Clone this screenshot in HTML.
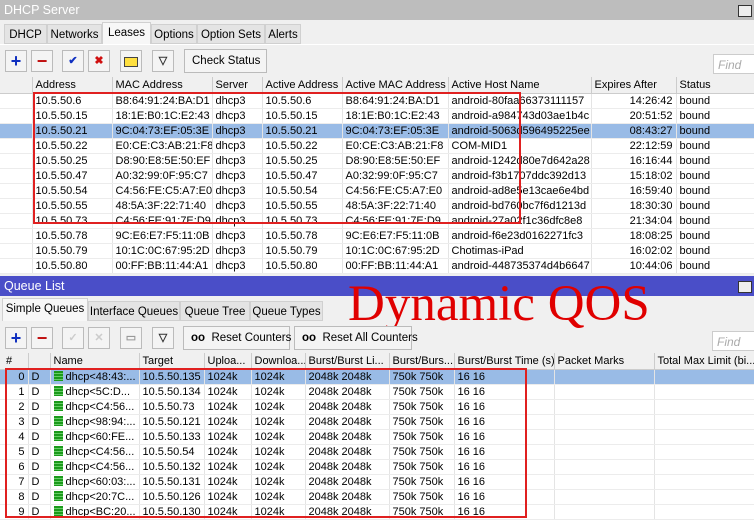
<!DOCTYPE html><html><head><style>
body{margin:0;width:754px;height:519px;overflow:hidden;background:#f0f0f0;font-family:"Liberation Sans",sans-serif;font-size:11px;color:#000;position:relative}
.abs{position:absolute}
.title{left:0;width:754px;height:20px;color:#fff;font-size:12.5px;line-height:20px;padding-left:4px;box-sizing:border-box}
.tab{position:absolute;height:20px;line-height:20px;background:#e4e4e4;border:1px solid #d0d0d0;font-size:11.5px;text-align:center;box-sizing:border-box;white-space:nowrap;overflow:hidden}
.tab.on{background:#f7f7f7;height:23px;border-bottom:none}
.btn{position:absolute;width:22px;height:22px;border:1px solid #bbb;background:#f4f4f4;box-sizing:border-box;text-align:center;line-height:20px;font-weight:bold}
.tbtn{position:absolute;height:24px;border:1px solid #bbb;background:#f4f4f4;box-sizing:border-box;line-height:22px;padding:0 7px;font-size:11.5px;white-space:nowrap}
.find{position:absolute;border:1px solid #ccc;background:#fff;color:#aaa;font-style:italic;font-size:12px;height:20px;line-height:20px;padding-left:4px;box-sizing:border-box}
table{position:absolute;left:0;border-collapse:collapse;table-layout:fixed;background:#fff}
td{height:15px;padding:0 0 0 3px;border-right:1px solid #e4e4e4;border-bottom:1px solid #ececec;white-space:nowrap;overflow:hidden;line-height:14px;box-sizing:border-box}
tr.h td{background:#f0f0f0;border-right:1px solid #ccc;border-bottom:1px solid #ccc;height:16px}
tr.s td{background:#99bbe6}
.r{text-align:right;padding-right:3px}
.box{position:absolute;border:2px solid #e02020;box-sizing:border-box}
.ic{display:inline-block;width:9px;height:10px;background:repeating-linear-gradient(#1a9a1a 0 2px,#6c6 2px 3px);vertical-align:-1px;margin-right:3px}
</style></head><body>
<div class="abs title" style="top:0;background:#bdbdbd">DHCP Server</div>
<div class="abs" style="right:2px;top:5px;width:12px;height:10px;border:1px solid #333;background:#eee"></div>
<div class="tab" style="left:4px;top:24px;width:43px">DHCP</div>
<div class="tab" style="left:47px;top:24px;width:55px">Networks</div>
<div class="tab on" style="left:102px;top:22px;width:49px">Leases</div>
<div class="tab" style="left:151px;top:24px;width:46px">Options</div>
<div class="tab" style="left:197px;top:24px;width:68px">Option Sets</div>
<div class="tab" style="left:265px;top:24px;width:36px">Alerts</div>
<div class="abs" style="left:0;top:44px;width:754px;height:1px;background:#fff"></div>
<div class="btn" style="left:5px;top:50px;color:#1030c0;font-size:18px">+</div>
<div class="btn" style="left:31px;top:50px;color:#c01010;font-size:18px">−</div>
<div class="btn" style="left:62px;top:50px;color:#1030c0">✔</div>
<div class="btn" style="left:88px;top:50px;color:#d01010">✖</div>
<div class="btn" style="left:120px;top:50px"><span style="display:inline-block;width:12px;height:8px;background:#ffe040;border:1px solid #444;margin-top:6px"></span></div>
<div class="btn" style="left:152px;top:50px;color:#333">▽</div>
<div class="tbtn" style="left:184px;top:49px;width:83px">Check Status</div>
<div class="find" style="left:713px;top:54px;width:45px">Find</div>
<table style="top:77px;width:754px">
<colgroup><col style="width:32px"><col style="width:80px"><col style="width:100px"><col style="width:50px"><col style="width:80px"><col style="width:106px"><col style="width:143px"><col style="width:85px"><col style="width:78px"></colgroup>
<tr class="h"><td></td><td>Address</td><td>MAC Address</td><td>Server</td><td>Active Address</td><td>Active MAC Address</td><td>Active Host Name</td><td>Expires After</td><td>Status</td></tr>
<tr><td></td><td>10.5.50.6</td><td>B8:64:91:24:BA:D1</td><td>dhcp3</td><td>10.5.50.6</td><td>B8:64:91:24:BA:D1</td><td>android-80faa66373111157</td><td class="r">14:26:42</td><td>bound</td></tr>
<tr><td></td><td>10.5.50.15</td><td>18:1E:B0:1C:E2:43</td><td>dhcp3</td><td>10.5.50.15</td><td>18:1E:B0:1C:E2:43</td><td>android-a984743d03ae1b4c</td><td class="r">20:51:52</td><td>bound</td></tr>
<tr class="s"><td></td><td>10.5.50.21</td><td>9C:04:73:EF:05:3E</td><td>dhcp3</td><td>10.5.50.21</td><td>9C:04:73:EF:05:3E</td><td>android-5063d596495225ee</td><td class="r">08:43:27</td><td>bound</td></tr>
<tr><td></td><td>10.5.50.22</td><td>E0:CE:C3:AB:21:F8</td><td>dhcp3</td><td>10.5.50.22</td><td>E0:CE:C3:AB:21:F8</td><td>COM-MID1</td><td class="r">22:12:59</td><td>bound</td></tr>
<tr><td></td><td>10.5.50.25</td><td>D8:90:E8:5E:50:EF</td><td>dhcp3</td><td>10.5.50.25</td><td>D8:90:E8:5E:50:EF</td><td>android-1242d80e7d642a28</td><td class="r">16:16:44</td><td>bound</td></tr>
<tr><td></td><td>10.5.50.47</td><td>A0:32:99:0F:95:C7</td><td>dhcp3</td><td>10.5.50.47</td><td>A0:32:99:0F:95:C7</td><td>android-f3b1707ddc392d13</td><td class="r">15:18:02</td><td>bound</td></tr>
<tr><td></td><td>10.5.50.54</td><td>C4:56:FE:C5:A7:E0</td><td>dhcp3</td><td>10.5.50.54</td><td>C4:56:FE:C5:A7:E0</td><td>android-ad8e5e13cae6e4bd</td><td class="r">16:59:40</td><td>bound</td></tr>
<tr><td></td><td>10.5.50.55</td><td>48:5A:3F:22:71:40</td><td>dhcp3</td><td>10.5.50.55</td><td>48:5A:3F:22:71:40</td><td>android-bd760bc7f6d1213d</td><td class="r">18:30:30</td><td>bound</td></tr>
<tr><td></td><td>10.5.50.73</td><td>C4:56:FE:91:7E:D9</td><td>dhcp3</td><td>10.5.50.73</td><td>C4:56:FE:91:7E:D9</td><td>android-27a02f1c36dfc8e8</td><td class="r">21:34:04</td><td>bound</td></tr>
<tr><td></td><td>10.5.50.78</td><td>9C:E6:E7:F5:11:0B</td><td>dhcp3</td><td>10.5.50.78</td><td>9C:E6:E7:F5:11:0B</td><td>android-f6e23d0162271fc3</td><td class="r">18:08:25</td><td>bound</td></tr>
<tr><td></td><td>10.5.50.79</td><td>10:1C:0C:67:95:2D</td><td>dhcp3</td><td>10.5.50.79</td><td>10:1C:0C:67:95:2D</td><td>Chotimas-iPad</td><td class="r">16:02:02</td><td>bound</td></tr>
<tr><td></td><td>10.5.50.80</td><td>00:FF:BB:11:44:A1</td><td>dhcp3</td><td>10.5.50.80</td><td>00:FF:BB:11:44:A1</td><td>android-448735374d4b6647</td><td class="r">10:44:06</td><td>bound</td></tr>
</table>
<div class="box" style="left:33px;top:92px;width:488px;height:132px"></div>

<div class="abs title" style="top:276px;background:#4a4ec8">Queue List</div>
<div class="abs" style="right:2px;top:281px;width:12px;height:10px;border:1px solid #333;background:#eee"></div>
<div class="tab on" style="left:2px;top:298px;width:86px">Simple Queues</div>
<div class="tab" style="left:88px;top:301px;width:92px">Interface Queues</div>
<div class="tab" style="left:180px;top:301px;width:70px">Queue Tree</div>
<div class="tab" style="left:250px;top:301px;width:73px">Queue Types</div>
<div class="abs" style="left:348px;top:275px;color:#e00000;font-family:'Liberation Serif',serif;font-size:51px;line-height:58px;white-space:nowrap">Dynamic QOS</div>
<div class="btn" style="left:5px;top:327px;color:#1030c0;font-size:18px">+</div>
<div class="btn" style="left:31px;top:327px;color:#c01010;font-size:18px">−</div>
<div class="btn" style="left:62px;top:327px;color:#ccc">✓</div>
<div class="btn" style="left:88px;top:327px;color:#ccc">✕</div>
<div class="btn" style="left:120px;top:327px;color:#999">▭</div>
<div class="btn" style="left:152px;top:327px;color:#333">▽</div>
<div class="tbtn" style="left:183px;top:326px;width:107px"><b>oo</b>&nbsp; Reset Counters</div>
<div class="tbtn" style="left:294px;top:326px;width:118px"><b>oo</b>&nbsp; Reset All Counters</div>
<div class="find" style="left:712px;top:331px;width:45px">Find</div>
<table style="top:353px;width:754px">
<colgroup><col style="width:28px"><col style="width:22px"><col style="width:89px"><col style="width:65px"><col style="width:47px"><col style="width:54px"><col style="width:84px"><col style="width:65px"><col style="width:100px"><col style="width:100px"><col style="width:100px"></colgroup>
<tr class="h"><td>&nbsp;#</td><td></td><td>Name</td><td>Target</td><td>Uploa...</td><td>Downloa...</td><td>Burst/Burst Li...</td><td>Burst/Burs...</td><td>Burst/Burst Time (s)</td><td>Packet Marks</td><td>Total Max Limit (bi...</td></tr>
<tr class="s"><td class="r">0</td><td>D</td><td><span class="ic"></span>dhcp&lt;48:43:...</td><td>10.5.50.135</td><td>1024k</td><td>1024k</td><td>2048k 2048k</td><td>750k 750k</td><td>16 16</td><td></td><td></td></tr>
<tr><td class="r">1</td><td>D</td><td><span class="ic"></span>dhcp&lt;5C:D...</td><td>10.5.50.134</td><td>1024k</td><td>1024k</td><td>2048k 2048k</td><td>750k 750k</td><td>16 16</td><td></td><td></td></tr>
<tr><td class="r">2</td><td>D</td><td><span class="ic"></span>dhcp&lt;C4:56...</td><td>10.5.50.73</td><td>1024k</td><td>1024k</td><td>2048k 2048k</td><td>750k 750k</td><td>16 16</td><td></td><td></td></tr>
<tr><td class="r">3</td><td>D</td><td><span class="ic"></span>dhcp&lt;98:94:...</td><td>10.5.50.121</td><td>1024k</td><td>1024k</td><td>2048k 2048k</td><td>750k 750k</td><td>16 16</td><td></td><td></td></tr>
<tr><td class="r">4</td><td>D</td><td><span class="ic"></span>dhcp&lt;60:FE...</td><td>10.5.50.133</td><td>1024k</td><td>1024k</td><td>2048k 2048k</td><td>750k 750k</td><td>16 16</td><td></td><td></td></tr>
<tr><td class="r">5</td><td>D</td><td><span class="ic"></span>dhcp&lt;C4:56...</td><td>10.5.50.54</td><td>1024k</td><td>1024k</td><td>2048k 2048k</td><td>750k 750k</td><td>16 16</td><td></td><td></td></tr>
<tr><td class="r">6</td><td>D</td><td><span class="ic"></span>dhcp&lt;C4:56...</td><td>10.5.50.132</td><td>1024k</td><td>1024k</td><td>2048k 2048k</td><td>750k 750k</td><td>16 16</td><td></td><td></td></tr>
<tr><td class="r">7</td><td>D</td><td><span class="ic"></span>dhcp&lt;60:03:...</td><td>10.5.50.131</td><td>1024k</td><td>1024k</td><td>2048k 2048k</td><td>750k 750k</td><td>16 16</td><td></td><td></td></tr>
<tr><td class="r">8</td><td>D</td><td><span class="ic"></span>dhcp&lt;20:7C...</td><td>10.5.50.126</td><td>1024k</td><td>1024k</td><td>2048k 2048k</td><td>750k 750k</td><td>16 16</td><td></td><td></td></tr>
<tr><td class="r">9</td><td>D</td><td><span class="ic"></span>dhcp&lt;BC:20...</td><td>10.5.50.130</td><td>1024k</td><td>1024k</td><td>2048k 2048k</td><td>750k 750k</td><td>16 16</td><td></td><td></td></tr>
</table>
<div class="box" style="left:5px;top:368px;width:522px;height:150px"></div>
</body></html>
